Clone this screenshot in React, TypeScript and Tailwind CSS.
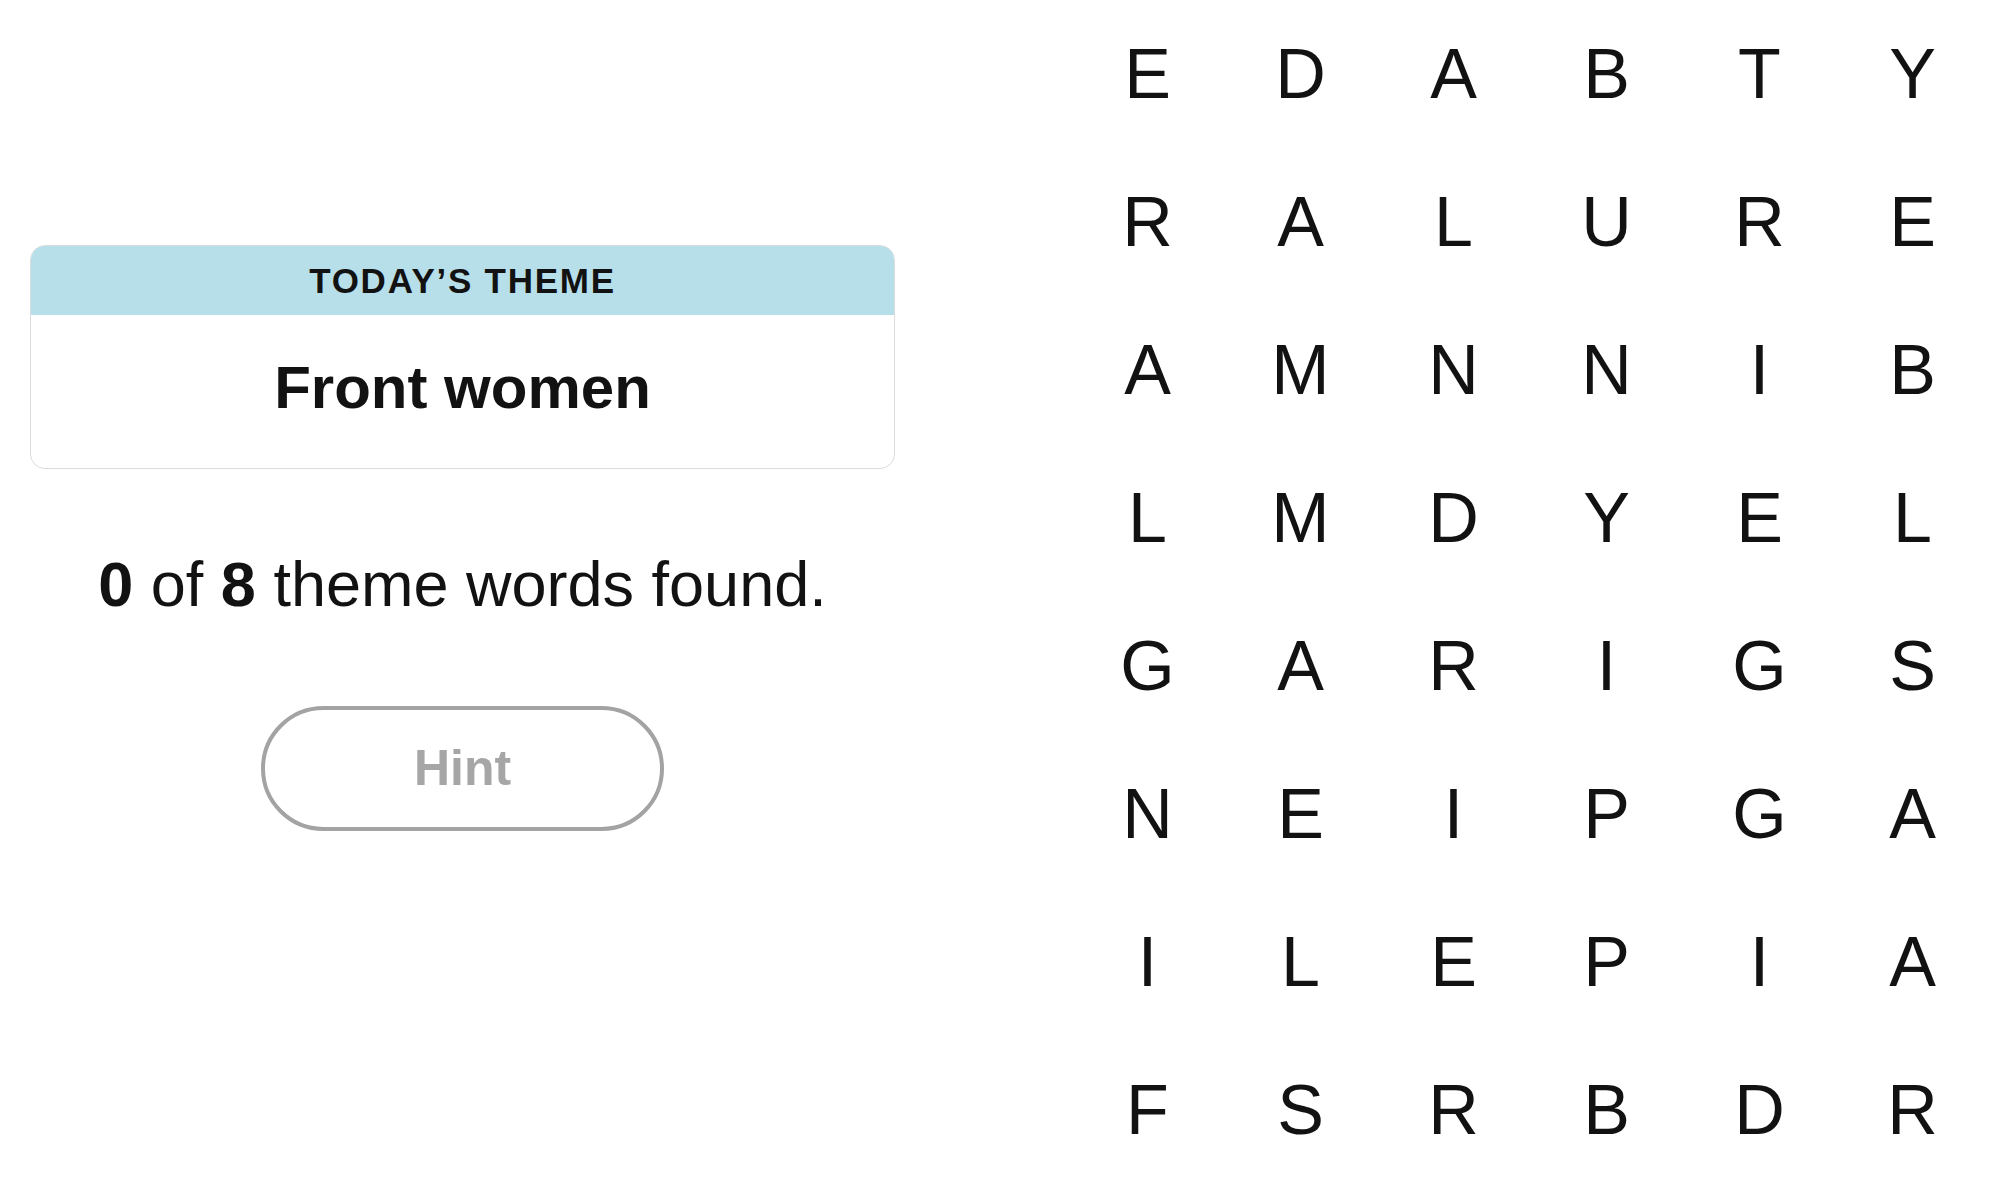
const GRID = [
  "EDABTY",
  "RALURE",
  "AMNNIB",
  "LMDYEL",
  "GARIGS",
  "NEIPGA",
  "ILEPIA",
  "FSRBDR",
];

export default function App() {
  return (
    <div
      className="flex h-[1189px] w-[2000px] overflow-hidden bg-white text-[#121212]"
      style={{ fontFamily: '"Liberation Sans", Arial, sans-serif' }}
    >
      {/* Left: theme card + progress */}
      <div className="flex w-[925px] flex-col items-center px-[30px] pt-[245px]">
        <div className="w-full overflow-hidden rounded-[15px] border border-[#dcdcdc]">
          <div className="flex h-[69px] items-center justify-center bg-[#b7dfea]">
            <span className="text-[35px] font-bold tracking-[0.05em] leading-none">
              TODAY’S THEME
            </span>
          </div>
          <div className="flex h-[153px] items-center justify-center pb-[8px]">
            <span className="text-[60px] font-bold leading-none">Front women</span>
          </div>
        </div>

        <p className="mt-[77px] text-[63px] leading-[76px]">
          <span className="font-bold">0</span> of <span className="font-bold">8</span> theme words found.
        </p>

        <button className="mt-[84px] flex h-[125px] w-[403px] items-center justify-center rounded-full border-[4px] border-[#a3a3a3] bg-white text-[50px] font-bold text-[#a6a6a6]">
          Hint
        </button>
      </div>

      {/* Right: letter grid */}
      <div className="ml-[146px] grid grid-cols-[repeat(6,153px)] grid-rows-[repeat(8,148px)]">
        {GRID.flatMap((row, r) =>
          row.split("").map((ch, c) => (
            <div key={`${r}-${c}`} className="flex items-center justify-center text-[70px] leading-none">
              {ch}
            </div>
          ))
        )}
      </div>
    </div>
  );
}
